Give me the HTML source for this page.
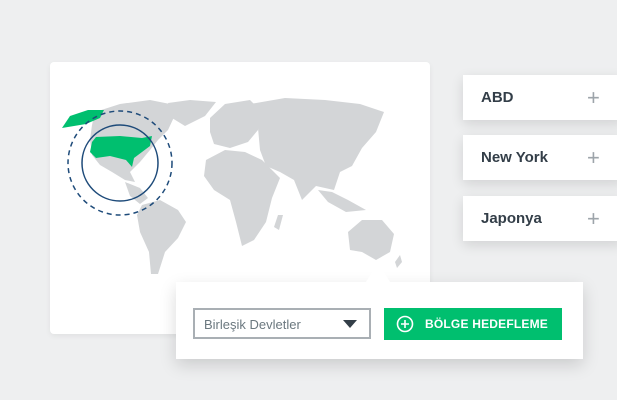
<!DOCTYPE html>
<html><head><meta charset="utf-8"><style>
body{margin:0;width:617px;height:400px;background:#eeeff0;position:relative;overflow:hidden;font-family:"Liberation Sans",sans-serif}
.card{position:absolute;left:50px;top:62px;width:380px;height:272px;background:#fff;border-radius:4px;box-shadow:0 2px 6px rgba(0,0,0,.06)}
.side{position:absolute;left:463px;width:160px;height:45px;background:#fff;box-shadow:0 4px 12px rgba(0,0,0,.12);font-weight:bold;font-size:15px;color:#333e48;line-height:45px;padding-left:18px;box-sizing:border-box}
.side span{position:absolute;left:124px;top:0;font-weight:normal;color:#9da4aa;font-size:22px}
.pop{position:absolute;left:176px;top:282px;width:407px;height:77px;background:#fff;box-shadow:0 6px 16px rgba(0,0,0,.15)}
.arrow{position:absolute;left:366px;top:262px;width:0;height:0;border-left:12px solid transparent;border-right:12px solid transparent;border-bottom:20px solid #fff}
.dd{position:absolute;left:193px;top:308px;width:178px;height:31px;border:2px solid #a9afb4;box-sizing:border-box;font-size:13px;color:#6b787f;line-height:29px;padding-left:9px}
.dd i{position:absolute;right:12px;top:10px;border-left:7px solid transparent;border-right:7px solid transparent;border-top:8px solid #333e48}
.btn{position:absolute;left:384px;top:308px;width:178px;height:32px;background:#00bf6f;color:#fff;font-weight:bold;font-size:12px;line-height:32px;padding-left:41px;box-sizing:border-box;letter-spacing:.2px}
.btn svg{position:absolute;left:12px;top:7px}
</style></head><body>
<div class="card"></div>
<svg style="position:absolute;left:0;top:0" width="617" height="400">
<g fill="#d3d5d7">
<path d="M95 112 L120 104 L150 100 L170 104 L175 115 L168 130 L158 140 L150 150 L140 162 L130 172 L135 182 L125 180 L112 172 L100 165 L92 155 L90 140 L92 125Z"/>
<path d="M125 182 L140 188 L148 198 L140 204 L130 196Z"/>
<path d="M168 103 L190 100 L216 102 L205 116 L185 126 L172 118Z"/>
<path d="M142 205 L160 200 L178 210 L186 222 L178 238 L165 252 L158 274 L151 274 L149 252 L140 232 L137 215Z"/>
<path d="M210 118 L225 104 L250 100 L262 112 L258 130 L248 142 L230 148 L214 144 L210 132Z"/>
<path d="M206 160 L225 150 L245 152 L262 160 L280 178 L272 198 L266 222 L254 240 L242 246 L236 222 L230 200 L214 190 L204 176Z"/>
<path d="M250 104 L285 98 L325 100 L360 104 L384 112 L376 132 L362 148 L352 166 L340 172 L334 190 L316 186 L302 200 L294 180 L280 172 L266 166 L260 150 L258 128Z"/>
<path d="M318 190 L332 192 L348 200 L366 210 L346 212 L328 202Z"/>
<path d="M348 232 L362 220 L382 220 L394 234 L390 252 L376 260 L362 252 L350 250Z"/>
<path d="M278 215 L283 215 L279 230 L274 227Z"/>
<path d="M395 262 L400 255 L402 262 L397 268Z"/>
</g>
<path d="M92 142 L96 137 L120 136 L142 138 L152 136 L150 146 L142 152 L134 158 L132 167 L126 160 L110 156 L96 158 L90 152 Z" fill="#00bf6f"/>
<path d="M62 128 L70 116 L88 110 L104 110 L100 118 L86 124 Z" fill="#00bf6f"/>
<circle cx="120" cy="163" r="38" fill="none" stroke="#1e4b7a" stroke-width="1.5"/>
<circle cx="120" cy="163" r="52" fill="none" stroke="#1e4b7a" stroke-width="1.5" stroke-dasharray="5 4"/>
</svg>
<div class="side" style="top:75px">ABD<span>+</span></div>
<div class="side" style="top:135px">New York<span>+</span></div>
<div class="side" style="top:196px">Japonya<span>+</span></div>
<div class="pop"></div>
<div class="arrow"></div>
<div class="dd">Birleşik Devletler<i></i></div>
<div class="btn"><svg width="18" height="18"><circle cx="9" cy="9" r="7.5" fill="none" stroke="#fff" stroke-width="1.6"/><path d="M9 5v8M5 9h8" stroke="#fff" stroke-width="1.6"/></svg>BÖLGE HEDEFLEME</div>
</body></html>
